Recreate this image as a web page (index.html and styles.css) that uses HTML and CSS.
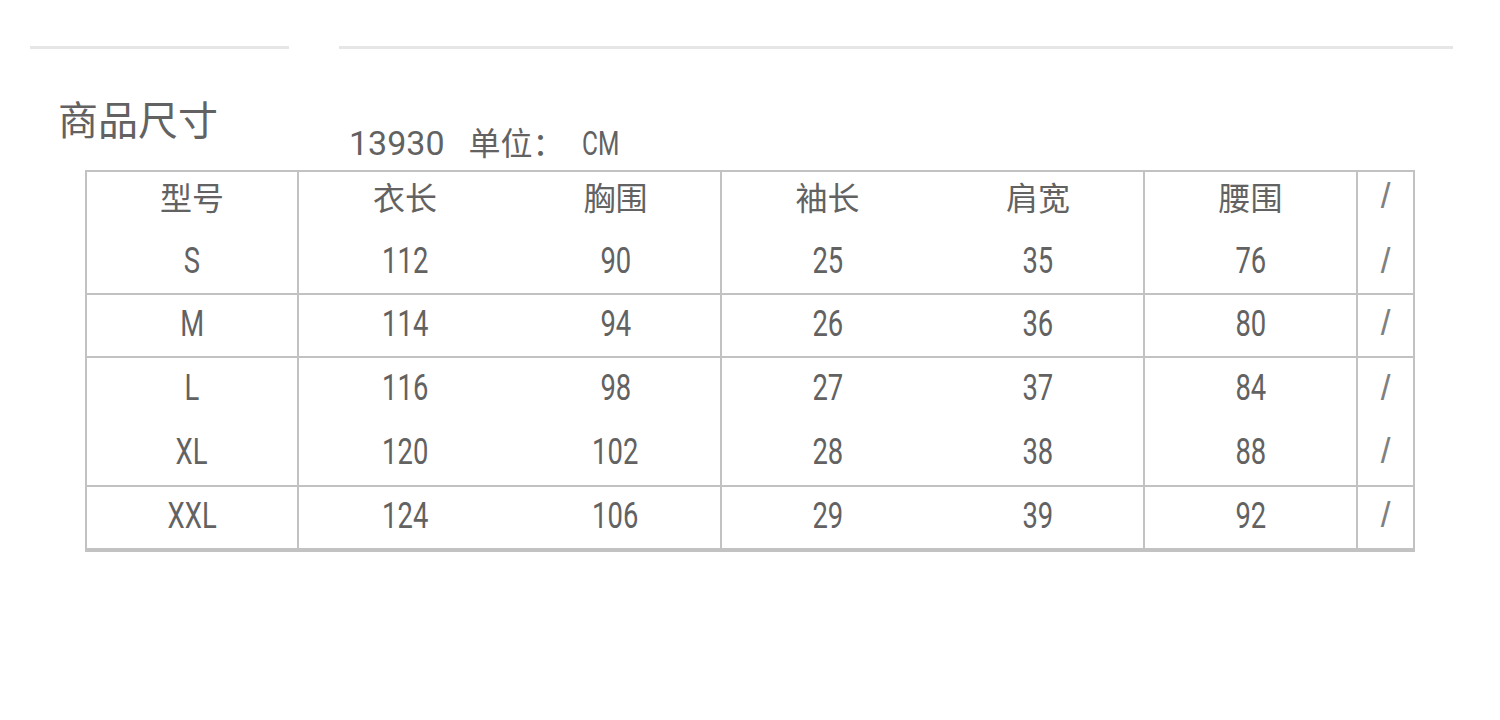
FILE: index.html
```html
<!DOCTYPE html>
<html lang="zh">
<head>
<meta charset="utf-8">
<link rel="stylesheet" href="styles.css">
</head>
<body>
<div class="page">
  <div class="rules">
    <div class="rule rule-short"></div>
    <div class="rule rule-long"></div>
  </div>
  <div class="heading">
    <h1 class="title">商品尺寸</h1>
    <div class="subtitle"><span class="lat">13930</span><span class="unit">单位：</span><span class="lat cm">CM</span></div>
  </div>
  <div class="chart">
    <div class="c r1">型号</div><div class="c r1">衣长</div><div class="c r1">胸围</div><div class="c r1">袖长</div><div class="c r1">肩宽</div><div class="c r1">腰围</div><div class="c r1 sl"><span>/</span></div>
    <div class="c b n"><span>S</span></div><div class="c b n"><span>112</span></div><div class="c b n"><span>90</span></div><div class="c b n"><span>25</span></div><div class="c b n"><span>35</span></div><div class="c b n"><span>76</span></div><div class="c b sl"><span>/</span></div>
    <div class="c b n"><span>M</span></div><div class="c b n"><span>114</span></div><div class="c b n"><span>94</span></div><div class="c b n"><span>26</span></div><div class="c b n"><span>36</span></div><div class="c b n"><span>80</span></div><div class="c b sl"><span>/</span></div>
    <div class="c n"><span>L</span></div><div class="c n"><span>116</span></div><div class="c n"><span>98</span></div><div class="c n"><span>27</span></div><div class="c n"><span>37</span></div><div class="c n"><span>84</span></div><div class="c sl"><span>/</span></div>
    <div class="c b n"><span>XL</span></div><div class="c b n"><span>120</span></div><div class="c b n"><span>102</span></div><div class="c b n"><span>28</span></div><div class="c b n"><span>38</span></div><div class="c b n"><span>88</span></div><div class="c b sl"><span>/</span></div>
    <div class="c n"><span>XXL</span></div><div class="c n"><span>124</span></div><div class="c n"><span>106</span></div><div class="c n"><span>29</span></div><div class="c n"><span>39</span></div><div class="c n"><span>92</span></div><div class="c sl"><span>/</span></div>
  </div>
</div>
</body>
</html>
```

FILE: styles.css
```css
* { box-sizing: border-box; }
html, body { margin: 0; padding: 0; background: #ffffff; }
body {
  width: 1500px;
  height: 720px;
  overflow: hidden;
  font-family: "Noto Sans CJK SC", "Noto Sans", sans-serif;
  color: #626262;
}
.rules {
  display: flex;
  padding-top: 46px;
}
.rule {
  height: 3px;
  background: #e6e6e6;
}
.rule-short { margin-left: 30px; width: 259px; }
.rule-long { margin-left: 50px; width: 1114px; }

.heading {
  display: flex;
  align-items: flex-start;
  margin-top: 49px;
}
.title {
  margin: 0 0 0 58px;
  font-size: 40px;
  line-height: 40px;
  font-weight: 400;
  width: 160px;
}
.subtitle {
  margin: 25px 0 0 131px;
  height: 36px;
  font-size: 32px;
  line-height: 36px;
  white-space: pre;
  display: flex;
  align-items: baseline;
}
.lat {
  font-family: Roboto, "Liberation Sans", sans-serif;
  font-size: 34px;
}
.unit { margin-left: 24px; }
.cm {
  display: inline-block;
  transform: scaleX(0.72);
  transform-origin: left center;
  margin-left: 17px;
}

.chart {
  margin: 11px 0 0 85px;
  width: 1326px;
  display: grid;
  grid-template-columns: 212px 212px 211px 211px 212px 213px 55px;
  grid-template-rows: 61px 62px 63px 64px 65px 61px;
  border-top: 2px solid #c2c2c2;
  border-left: 2px solid #c2c2c2;
  border-right: 2px solid #c2c2c2;
  border-bottom: 4px solid #c2c2c2;
  box-sizing: content-box;
}
.c {
  display: flex;
  align-items: center;
  justify-content: center;
  font-size: 32px;
  padding-bottom: 5px;
}
.c:nth-child(7n+1),
.c:nth-child(7n+3),
.c:nth-child(7n+5),
.c:nth-child(7n+6) {
  border-right: 2px solid #c2c2c2;
}
.c.b { border-bottom: 2px solid #c2c2c2; }
.c.r1 { padding-bottom: 14px; }
.n {
  font-family: Roboto, "Liberation Sans", sans-serif;
  font-size: 37px;
}
.n span {
  display: inline-block;
  transform: scaleX(0.74);
}
.sl {
  font-family: "Liberation Sans", sans-serif;
  font-size: 35px;
  font-weight: 400;
  color: #808080;
}
```
